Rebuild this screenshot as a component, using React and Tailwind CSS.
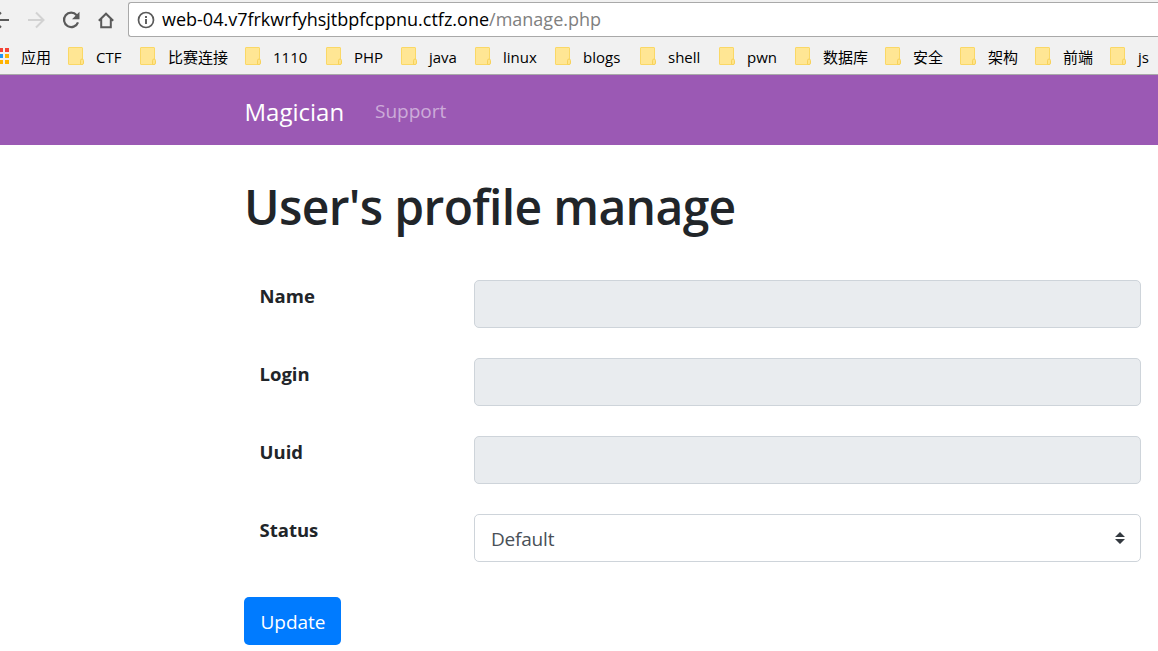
import React from "react";

const bookmarks = [
  { label: "CTF", width: "w-[72px]" },
  { label: "比赛连接", width: "w-[105px]" },
  { label: "1110", width: "w-[81px]" },
  { label: "PHP", width: "w-[75px]" },
  { label: "java", width: "w-[74px]" },
  { label: "linux", width: "w-[80px]" },
  { label: "blogs", width: "w-[85px]" },
  { label: "shell", width: "w-[79px]" },
  { label: "pwn", width: "w-[76px]" },
  { label: "数据库", width: "w-[90px]" },
  { label: "安全", width: "w-[75px]" },
  { label: "架构", width: "w-[75px]" },
  { label: "前端", width: "w-[75px]" },
  { label: "js", width: "w-[48px]" },
];

const appDots = [
  ["#f44336", "#f44336"],
  ["#2196f3", "#ffb300"],
  ["#ffb300", "#ffb300"],
];

function Folder() {
  return (
    <svg className="mt-px h-[18px] w-4 shrink-0" viewBox="0 0 16 18">
      <path d="M1 .5h13q.5 0 .5.5v16.500H1q-.5 0-.5-.5V1q0-.5.5-.5z" fill="#ffe694" stroke="#fad866" />
      <path d="M12.500 17.500v-3.800q0-1.700 1.500-1.700t1.500 1.700v2.300q0 1.500-1.500 1.500z" fill="#ffe48a" stroke="#f7d25c" />
    </svg>
  );
}

function AppsIcon() {
  return (
    <svg className="mt-[2px] h-4 w-[9px] shrink-0" viewBox="0 0 9 16">
      {appDots.map((row, r) =>
        row.map((fill, c) => <rect key={`${r}-${c}`} x={c * 6 - 1} y={r * 6} width="4" height="4" fill={fill} />)
      )}
    </svg>
  );
}

function Toolbar() {
  return (
    <div className="flex h-[37px] items-start">
      <svg className="h-[37px] w-[128px] shrink-0" viewBox="0 0 128 37" fill="none" strokeWidth="2">
        <path d="M-6 20H9M1 12.500L-6.500 20L1 27.500" stroke="#5a5a5a" />
        <path d="M28 20H43M36 12.500L43.500 20L36 27.500" stroke="#d2d2d2" />
        <path d="M76.700 15.200A7.200 7.200 0 1 0 78 22.300" stroke="#5a5a5a" strokeWidth="2.200" />
        <path d="M79.500 11.800V19.200H72z" fill="#5a5a5a" />
        <path d="M98.800 20.800L106 13.700L113.200 20.800M101.200 19V27.200H110.800V19" stroke="#5a5a5a" />
      </svg>
      <div className="mt-[2px] flex h-[35px] flex-1 items-center rounded-l-[3px] border border-r-0 border-[#a9a9a9] bg-white pl-2">
        <svg className="mt-px h-[18px] w-[18px] shrink-0" viewBox="0 0 18 18" fill="none" stroke="#5a5a5a">
          <circle cx="9" cy="9" r="7.500" strokeWidth="1.700" />
          <path d="M9 8v5M9 5v2" strokeWidth="1.900" />
        </svg>
        <div className="ml-[7px] whitespace-nowrap pb-px text-[18px] leading-6 text-black">
          <span>web-04.v7frkwrfyhsjtbpfcppnu.ctfz.one</span>
          <span className="text-[#808080]">/manage.php</span>
        </div>
      </div>
    </div>
  );
}

function Field({ label, children }) {
  return (
    <div className="flex h-12">
      <div className="w-[230px] shrink-0 pl-[15.500px] pt-px text-[18.500px] font-bold leading-[30px]">{label}</div>
      {children}
    </div>
  );
}

export default function App() {
  return (
    <div className="h-[651px] w-[1158px] overflow-hidden bg-white font-['Open_Sans','Noto_Sans_CJK_SC',sans-serif] text-[#212529]">
      <header className="h-[75px] border-b border-[#a9a9a9] bg-[#f1f1f1]">
        <Toolbar />
        <div className="flex h-[37px] items-center pb-px text-[15px] text-black">
          <AppsIcon />
          <span className="ml-3 w-[47px] shrink-0 pt-1">应用</span>
          {bookmarks.map((b) => (
            <div key={b.label} className={`flex shrink-0 items-center ${b.width}`}>
              <Folder />
              <span className="ml-3 whitespace-nowrap pt-1">{b.label}</span>
            </div>
          ))}
        </div>
      </header>
      <nav className="flex h-[70px] items-center bg-[#9b59b4] pl-[244.500px] pt-[3px] text-white">
        <span className="w-[130.500px] text-[24px]">Magician</span>
        <span className="text-[19px] text-white/50">Support</span>
      </nav>
      <main className="pl-[244px] pr-[17px] pt-[32px]">
        <h1 className="h-[60px] whitespace-nowrap text-[48px] font-semibold leading-[60px] tracking-[-0.650px]">User's profile manage</h1>
        <form className="mt-[43px]">
          <div className="flex flex-col gap-[30px]">
            {["Name", "Login", "Uuid"].map((label) => (
              <Field key={label} label={label}>
                <input disabled aria-label={label} className="h-12 min-w-0 flex-1 rounded-[5px] border border-[#ced4da] bg-[#e9ecef]" />
              </Field>
            ))}
            <Field label="Status">
              <div className="flex h-12 flex-1 items-center justify-between rounded-[5px] border border-[#ced4da] bg-white pl-4 pr-[15px] text-[19px] text-[#495057]">
                <span className="pt-[2px] tracking-[-0.200px]">Default</span>
                <svg className="h-3 w-[10px]" viewBox="0 0 10 12" fill="#343a40">
                  <path d="M0 5L5 0L10 5zM0 7L5 12L10 7z" />
                </svg>
              </div>
            </Field>
          </div>
          <button type="button" className="mt-[35px] h-12 w-[97px] rounded-[5px] bg-[#007bff] pl-px pt-[2px] text-[19px] text-white">Update</button>
        </form>
      </main>
    </div>
  );
}
